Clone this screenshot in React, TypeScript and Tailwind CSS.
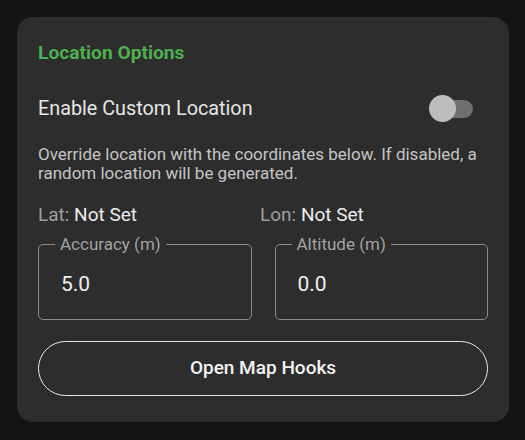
import React from "react";

function Field({ label, value }: { label: string; value: string }) {
  return (
    <fieldset className="flex-1 border border-[#8a8a8a] rounded-[5px] px-0 pb-[21px] m-0 min-w-0">
      <legend className="ml-[16px] px-[5px] text-[17px] leading-[20px] text-[#a3a3a3]">{label}</legend>
      <div className="pl-[22px] pt-[16px] text-[21px] leading-[28px] text-[#f0f0f0]">{value}</div>
    </fieldset>
  );
}

export default function App() {
  return (
    <div
      className="w-[525px] h-[440px] bg-[#141414] pt-[17px] px-[17px]"
      style={{ fontFamily: "Roboto, 'Noto Sans', sans-serif" }}
    >
      <div className="w-[492px] h-[405px] bg-[#2d2d2d] rounded-[16px] pt-[24px] px-[21px]">
        <div className="text-[19.2px] leading-[24px] font-bold text-[#4caf50]">Location Options</div>
        <div className="mt-[28px] h-[32px] flex items-center justify-between">
          <span className="text-[19.8px] text-[#e6e6e6]">Enable Custom Location</span>
          <div className="relative w-[44px] h-[32px] mr-[15px]">
            <div className="absolute left-[4px] right-0 top-[7px] h-[18px] rounded-full bg-[#6e6e6e]" />
            <div className="absolute left-0 top-[2px] w-[27px] h-[27px] rounded-full bg-[#bdbdbd]" />
          </div>
        </div>
        <p className="mt-[20px] text-[17px] leading-[19px] text-[#c4c4c4]">
          Override location with the coordinates below. If disabled, a random location will be generated.
        </p>
        <div className="mt-[20px] h-[24px] flex items-center text-[19px]">
          <div className="w-[222px]">
            <span className="text-[#9e9e9e]">Lat: </span>
            <span className="text-[#ececec]">Not Set</span>
          </div>
          <div>
            <span className="text-[#9e9e9e]">Lon: </span>
            <span className="text-[#ececec]">Not Set</span>
          </div>
        </div>
        <div className="mt-[7px] flex gap-[23px]">
          <Field label="Accuracy (m)" value="5.0" />
          <Field label="Altitude (m)" value="0.0" />
        </div>
        <button className="mt-[21px] w-full h-[55px] rounded-full border-[1.5px] border-[#e8e8e8] text-[19px] font-medium text-[#f2f2f2]">
          Open Map Hooks
        </button>
      </div>
    </div>
  );
}
